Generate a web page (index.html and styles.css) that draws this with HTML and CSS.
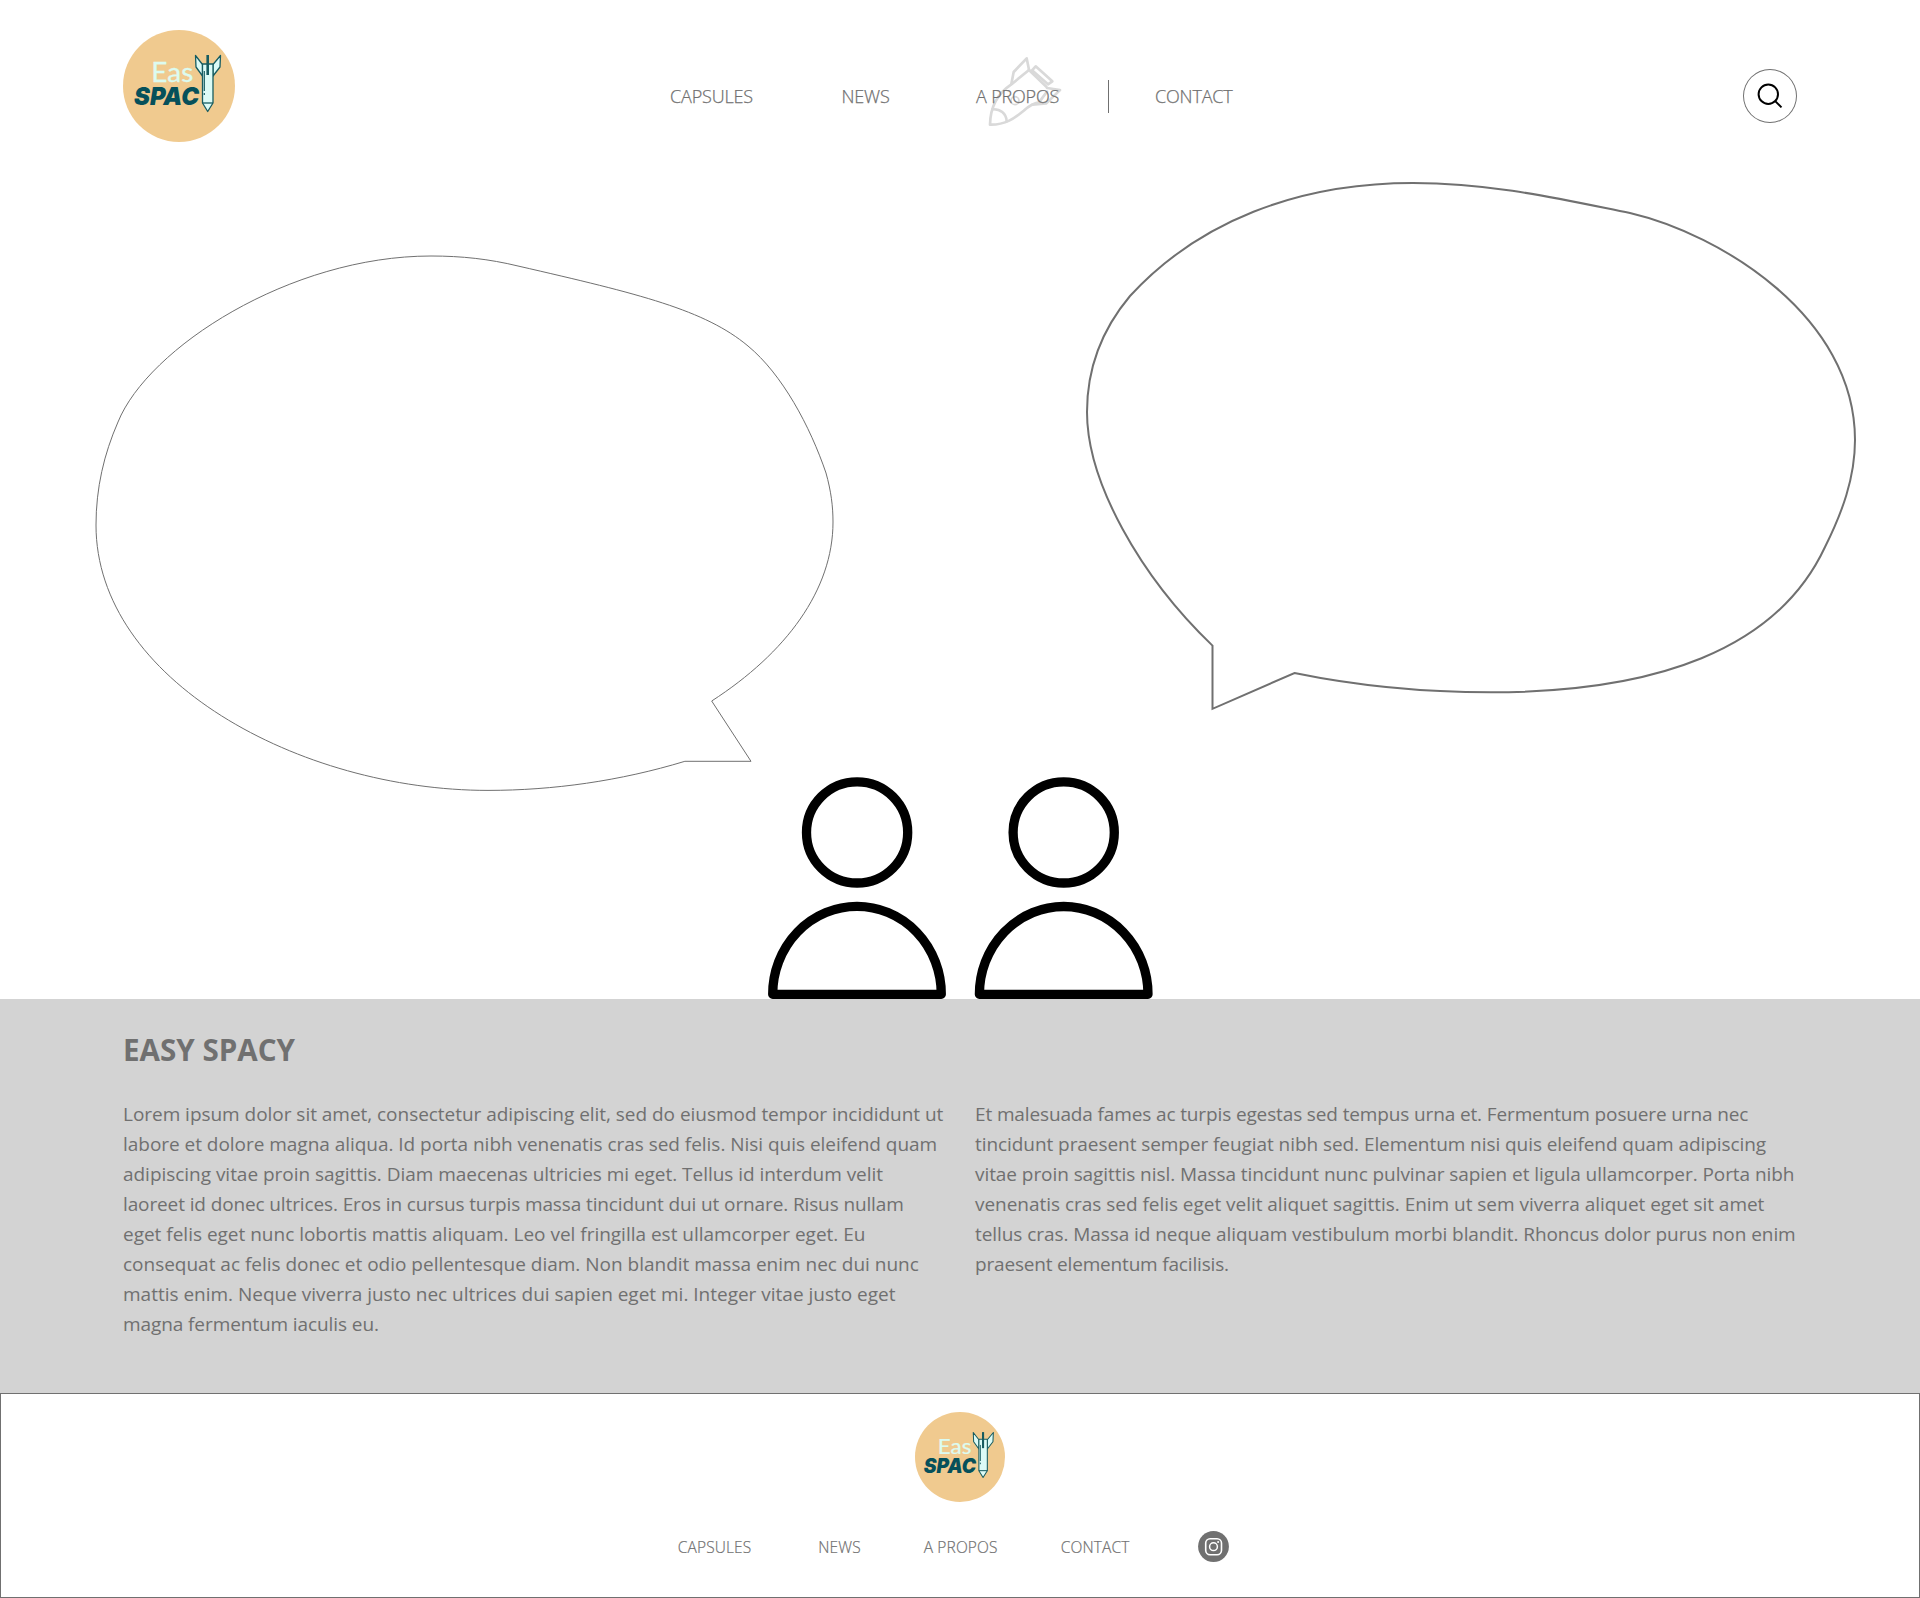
FILE: index.html
```html
<!DOCTYPE html>
<html lang="fr">
<head>
<meta charset="utf-8">
<title>Easy Spacy</title>
<link rel="stylesheet" href="styles.css">
</head>
<body>
<header class="header">
  <a class="brand">
    <svg width="112" height="112" viewBox="0 0 112 112">
      <g id="logo">
        <circle cx="56" cy="56" r="56" fill="#f0ca8f"/>
        <text class="logo-eas" x="28.3" y="52.3" textLength="42" lengthAdjust="spacingAndGlyphs">Eas</text>
        <text class="logo-spac" x="0" y="0" transform="translate(11 75.3)" textLength="65" lengthAdjust="spacingAndGlyphs">SPAC</text>
        <g stroke="#175c60" stroke-width="1.3" fill="#dcfbf6" stroke-linejoin="round">
          <path d="M79.5 34.5 L72.5 25.5 L73 37 L79.5 46 Z M90 34.5 L97.5 25.5 L97 37 L90 46 Z"/>
          <path d="M79.5 34 H90 V73 L84.7 81.5 L79.5 73 Z"/>
          <path d="M79.5 73 H90"/>
          <path d="M84.7 25 V45" stroke-width="2.6"/>
          <path d="M81.3 41 V61 M81.3 63 V65" stroke-width="1.2"/>
        </g>
      </g>
    </svg>
  </a>
  <nav class="nav">
    <a class="nav-capsules">CAPSULES</a>
    <a class="nav-news">NEWS</a>
    <a class="nav-about">A PROPOS
      <svg class="rocket" width="100" height="85" viewBox="0 0 300 255">
        <g fill="none" stroke="#d9d9d9" stroke-width="8" stroke-linejoin="round" stroke-linecap="round">
          <path d="M162 60 L108 104 C72 128 46 168 45 224 C92 225 118 205 146 182 C166 164 178 159 192 157 L216 125"/>
          <path d="M162 60 L214 110"/>
          <path d="M109 102 L116 66 L155 25 L162 59"/>
          <path d="M171 61 L182 49 L232 94 L219 103 Z"/>
          <path d="M216 114 L255 120 L214 160 L172 164"/>
          <path d="M52 178 C75 176 94 190 95 214"/>
          <circle cx="120" cy="152" r="12" stroke-width="5"/>
        </g>
      </svg>
    </a>
    <a class="nav-contact">CONTACT</a>
  </nav>
  <button class="search" aria-label="Rechercher">
    <svg width="54" height="54" viewBox="0 0 54 54" fill="none" stroke="#000" stroke-width="2">
      <circle cx="25.3" cy="25.2" r="9.7"/>
      <path d="M32.2 32.1 L38.5 38.4"/>
    </svg>
  </button>
</header>

<section class="stage">
  <svg width="1920" height="827" viewBox="0 172 1920 827" fill="none">
    <path stroke="#707070" stroke-width="1" d="M518 266 C640 294 705 310 748 346 C782 374 810 426 826 473 C831 491 833 506 833 522 C833 590 786 653 711.7 701 L751 761.3 H684.9 C620 781 553 790.4 488 790.4 C300 790.4 96 680 96 525 C96 488 104 454 118 422 C148 348 290 256 431 256 C462 256 489 259 518 266 Z"/>
    <path stroke="#707070" stroke-width="2" d="M1130 296 C1198 222 1297 183 1413 183 C1492 183 1560 199 1630 213 C1720 234 1855 316 1855 440 C1855 478 1842 513 1825 547 C1777 650 1655 692.3 1491 692.3 C1428 692.3 1360 686.5 1294.5 673 L1212.5 708.8 V645.6 C1140 576 1087 482 1087 412 C1087 365 1104 327 1130 296 Z"/>
    <g stroke="#000" stroke-width="9.3" stroke-linejoin="round">
      <circle cx="857.1" cy="832.4" r="50.6"/>
      <path d="M772.7 994.3 A84.3 87.9 0 0 1 941.3 994.3 Z"/>
      <circle cx="1063.7" cy="832.4" r="50.6"/>
      <path d="M979.4 994.3 A84.3 87.9 0 0 1 1148 994.3 Z"/>
    </g>
  </svg>
</section>

<main class="about">
  <h1>EASY SPACY</h1>
  <div class="columns">
    <p class="col-left"><span>Lorem ipsum dolor sit amet, consectetur adipiscing elit, sed do eiusmod tempor incididunt ut</span> <span>labore et dolore magna aliqua. Id porta nibh venenatis cras sed felis. Nisi quis eleifend quam</span> <span>adipiscing vitae proin sagittis. Diam maecenas ultricies mi eget. Tellus id interdum velit</span> <span>laoreet id donec ultrices. Eros in cursus turpis massa tincidunt dui ut ornare. Risus nullam</span> <span>eget felis eget nunc lobortis mattis aliquam. Leo vel fringilla est ullamcorper eget. Eu</span> <span>consequat ac felis donec et odio pellentesque diam. Non blandit massa enim nec dui nunc</span> <span>mattis enim. Neque viverra justo nec ultrices dui sapien eget mi. Integer vitae justo eget</span> <span>magna fermentum iaculis eu.</span></p>
    <p class="col-right"><span>Et malesuada fames ac turpis egestas sed tempus urna et. Fermentum posuere urna nec</span> <span>tincidunt praesent semper feugiat nibh sed. Elementum nisi quis eleifend quam adipiscing</span> <span>vitae proin sagittis nisl. Massa tincidunt nunc pulvinar sapien et ligula ullamcorper. Porta nibh</span> <span>venenatis cras sed felis eget velit aliquet sagittis. Enim ut sem viverra aliquet eget sit amet</span> <span>tellus cras. Massa id neque aliquam vestibulum morbi blandit. Rhoncus dolor purus non enim</span> <span>praesent elementum facilisis.</span></p>
  </div>
</main>

<footer class="footer">
  <svg width="90" height="90" viewBox="0 0 112 112"><use href="#logo"/></svg>
  <nav class="foot-nav">
    <a>CAPSULES</a>
    <a>NEWS</a>
    <a>A PROPOS</a>
    <a>CONTACT</a>
    <svg width="31" height="31" viewBox="0 0 31 31" fill="none" stroke="#fff">
      <circle cx="15.5" cy="15.5" r="15.4" fill="#707070" stroke="none"/>
      <rect x="7.7" y="7.7" width="15.8" height="16" rx="4.4" stroke-width="1.6"/>
      <circle cx="15.5" cy="15.7" r="3.9" stroke-width="1.5"/>
      <circle cx="20.1" cy="11.1" r="1" fill="#fff" stroke="none"/>
    </svg>
  </nav>
</footer>
</body>
</html>
```
FILE: styles.css
```css
* { box-sizing: border-box; }
body {
  margin: 0;
  width: 1920px;
  background: #fff;
  color: #707070;
  font-family: "Open Sans", "Noto Sans", sans-serif;
}
svg { display: block; }
.logo-eas { font: 400 27px Lato, sans-serif; fill: #dcfbf0; stroke: #dcfbf0; stroke-width: .3; }
.logo-spac { font: italic 900 25px Inter, sans-serif; fill: #06505a; }

.header {
  display: flex;
  height: 172px;
  padding: 30px 123px 0;
}
.nav {
  display: grid;
  grid-template-columns: 171.5px 134.5px 132px 124px;
  height: 33px;
  margin: 50px auto 0 435px;
  font-size: 18px;
  font-weight: 300;
  line-height: 33px;
  letter-spacing: -.17px;
  white-space: nowrap;
  -webkit-text-stroke: .25px #707070;
}
.nav-about { position: relative; }
.rocket { position: absolute; left: -1px; top: -30px; z-index: -1; }
.nav-contact { border-left: 1px solid #707070; padding-left: 46px; }
.search {
  width: 54px;
  height: 54px;
  margin-top: 39px;
  padding: 0;
  border: 0;
  border-radius: 50%;
  background: none;
  box-shadow: inset 0 0 0 1px #707070;
}

.about {
  height: 394px;
  padding: 31px 123px 0;
  background: #d3d3d3;
}
.about h1 {
  margin: 0;
  font-size: 29.6px;
  line-height: 40px;
}
.columns {
  display: grid;
  grid-template-columns: 852px 822px;
  margin-top: 29px;
  font-size: 19px;
  line-height: 30px;
}
.columns p { margin: 0; }
.columns span { display: block; width: max-content; white-space: nowrap; }
.col-left span { letter-spacing: -.032px; }
.col-left span:nth-child(4) { letter-spacing: -.12px; }
.col-left span:nth-child(n+5) { letter-spacing: -.01px; }
.col-left span:last-child { letter-spacing: -.09px; }
.col-right span { letter-spacing: -.066px; }
.col-right span:first-child { letter-spacing: -.13px; }
.col-right span:nth-child(4) { letter-spacing: -.03px; }
.col-right span:last-child { letter-spacing: -.18px; }

.footer {
  display: flex;
  flex-direction: column;
  align-items: center;
  height: 205px;
  padding-top: 18px;
  border: 1px solid #707070;
}
.foot-nav {
  display: grid;
  grid-template-columns: 140.5px 105.5px 137px 137.5px 31px;
  align-items: start;
  margin: 29px 13px 0 0;
  font-size: 15.5px;
  font-weight: 300;
  line-height: 31px;
  letter-spacing: .13px;
  white-space: nowrap;
  -webkit-text-stroke: .2px #707070;
}
.foot-nav a { padding-top: 1px; }
```
